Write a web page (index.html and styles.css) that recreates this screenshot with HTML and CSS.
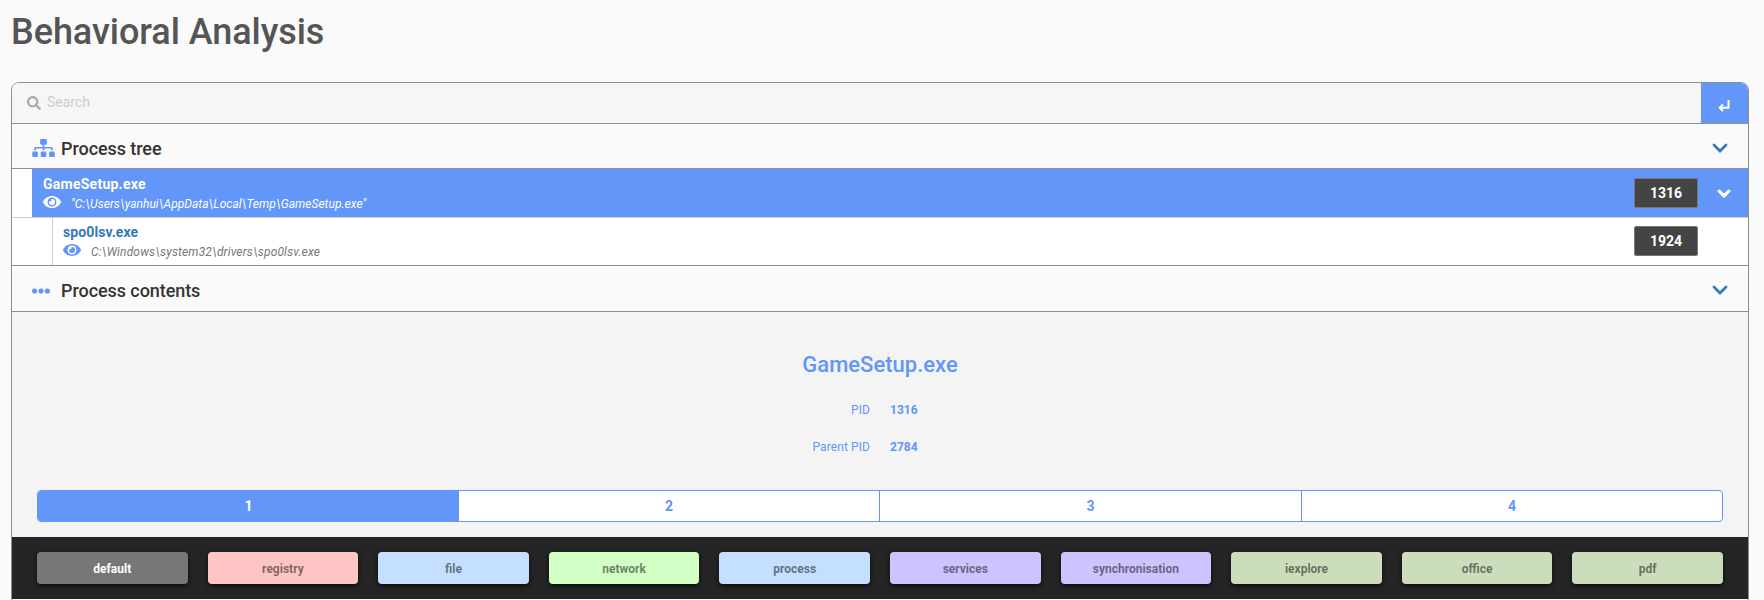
FILE: index.html
```html
<!DOCTYPE html>
<html lang="en">
<head>
<meta charset="utf-8">
<title>Behavioral Analysis</title>
<link rel="stylesheet" href="styles.css">
</head>
<body>
<h1 class="title">Behavioral Analysis</h1>
<main class="panel">
  <div class="search">
    <svg class="search-icon" viewBox="0 0 512 512"><path d="M505 442.700L405.300 343c-4.500-4.500-10.600-7-17-7H372c27.600-35.300 44-79.700 44-128C416 93.100 322.900 0 208 0S0 93.100 0 208s93.100 208 208 208c48.300 0 92.700-16.400 128-44v16.300c0 6.400 2.500 12.500 7 17l99.700 99.700c9.400 9.400 24.600 9.400 33.900 0l28.300-28.300c9.400-9.400 9.400-24.600.1-34zM208 336c-70.700 0-128-57.200-128-128 0-70.700 57.200-128 128-128 70.700 0 128 57.200 128 128 0 70.700-57.200 128-128 128z"/></svg>
    <input class="search-input" type="text" placeholder="Search">
    <button class="enter" aria-label="Submit"><svg viewBox="0 0 12 12"><path d="M10.500 0V7.800H2M5 4.500L1.700 7.800L5 11.100"/></svg></button>
  </div>
  <header class="section">
    <svg class="sitemap" viewBox="0 0 640 512"><path d="M128 352H32c-17.670 0-32 14.330-32 32v96c0 17.670 14.330 32 32 32h96c17.670 0 32-14.330 32-32v-96c0-17.670-14.330-32-32-32zm-24-80h192v48h48v-48h192v48h48v-57.590c0-21.170-17.230-38.410-38.410-38.410H344v-64h40c17.670 0 32-14.330 32-32V32c0-17.670-14.330-32-32-32H256c-17.670 0-32 14.330-32 32v96c0 17.670 14.330 32 32 32h40v64H94.410C73.230 224 56 241.230 56 262.410V320h48v-48zm264 80h-96c-17.670 0-32 14.330-32 32v96c0 17.670 14.330 32 32 32h96c17.670 0 32-14.330 32-32v-96c0-17.670-14.330-32-32-32zm240 0h-96c-17.670 0-32 14.330-32 32v96c0 17.670 14.330 32 32 32h96c17.670 0 32-14.330 32-32v-96c0-17.670-14.330-32-32-32z"/></svg>
    <h2>Process tree</h2>
    <svg class="chev" viewBox="0 0 16 10"><path d="M2 2L8 8L14 2"/></svg>
  </header>
  <div class="node active">
    <div class="node-text"><b>GameSetup.exe</b><div class="path"><svg class="eye" viewBox="0 64 576 384" preserveAspectRatio="none"><path d="M572.520 241.400C518.290 135.590 410.930 64 288 64S57.680 135.640 3.480 241.410a32.350 32.350 0 0 0 0 29.190C57.710 376.410 165.070 448 288 448s230.320-71.640 284.520-177.410a32.350 32.350 0 0 0 0-29.190zM288 400a144 144 0 1 1 144-144 143.930 143.930 0 0 1-144 144zm0-240a95.310 95.310 0 0 0-25.310 3.790 47.850 47.850 0 0 1-66.900 66.900A95.780 95.780 0 1 0 288 160z"/></svg><i>"C:\Users\yanhui\AppData\Local\Temp\GameSetup.exe"</i></div></div>
    <span class="pid">1316</span>
    <svg class="toggle" viewBox="0 0 14 10"><path d="M2.200 2.200L7 7L11.800 2.200"/></svg>
  </div>
  <div class="node child">
    <div class="node-text"><b>spo0lsv.exe</b><div class="path"><svg class="eye" viewBox="0 64 576 384" preserveAspectRatio="none"><path d="M572.520 241.400C518.290 135.590 410.930 64 288 64S57.680 135.640 3.480 241.410a32.350 32.350 0 0 0 0 29.190C57.710 376.410 165.070 448 288 448s230.320-71.640 284.520-177.410a32.350 32.350 0 0 0 0-29.190zM288 400a144 144 0 1 1 144-144 143.930 143.930 0 0 1-144 144zm0-240a95.310 95.310 0 0 0-25.310 3.790 47.850 47.850 0 0 1-66.900 66.900A95.780 95.780 0 1 0 288 160z"/></svg><i>C:\Windows\system32\drivers\spo0lsv.exe</i></div></div>
    <span class="pid">1924</span>
  </div>
  <header class="section contents-head">
    <svg class="dots" viewBox="0 0 18 6"><circle cx="2.600" cy="3" r="2.600"/><circle cx="9" cy="3" r="2.600"/><circle cx="15.400" cy="3" r="2.600"/></svg>
    <h2>Process contents</h2>
    <svg class="chev" viewBox="0 0 16 10"><path d="M2 2L8 8L14 2"/></svg>
  </header>
  <section class="contents">
    <h3>GameSetup.exe</h3>
    <dl><dt>PID</dt><dd>1316</dd><dt>Parent PID</dt><dd>2784</dd></dl>
    <nav class="pages"><a class="current">1</a><a>2</a><a>3</a><a>4</a></nav>
  </section>
  <div class="filters">
    <span class="default">default</span><span class="registry">registry</span><span class="file">file</span><span class="network">network</span><span class="file">process</span><span class="services">services</span><span class="services">synchronisation</span><span class="app">iexplore</span><span class="app">office</span><span class="app">pdf</span>
  </div>
</main>
</body>
</html>
```
FILE: styles.css
```css
* { box-sizing: border-box; }
body { margin: 0; height: 600px; overflow: hidden; background: #fafafa; color: #333; font: 14px/20px Roboto, sans-serif; }
.title { margin: 0; padding: 12px 11px 0; height: 82px; font-size: 36px; line-height: 40px; font-weight: 500; letter-spacing: -.05px; color: #555; }
.panel { margin: 0 15px 0 11px; height: 530px; border: 1px solid #8f8f8f; border-radius: 8px 8px 0 0; overflow: hidden; }
.search { display: flex; align-items: center; height: 41px; padding-left: 15px; background: #f6f6f6; border-bottom: 1px solid #8f8f8f; }
.search-icon { width: 14px; height: 14px; fill: #aaa; }
.search-input { flex: 1; margin: 0 0 2px 6px; padding: 0; border: 0; background: none; font: inherit; outline: 0; }
.search-input::placeholder { color: #ccc; opacity: 1; }
.enter { display: flex; width: 47px; height: 40px; padding: 5px 2px 0 0; align-items: center; justify-content: center; border: 0; background: #6296f8; }
.enter svg { width: 12px; height: 12px; fill: none; stroke: #fff; stroke-width: 2; }
.section { display: flex; align-items: center; height: 45px; padding: 5px 20px 0 20px; border-bottom: 1px solid #8f8f8f; }
.section h2 { flex: 1; margin: 0; padding-top: 1px; font-size: 18px; font-weight: 500; letter-spacing: -.07px; }
.sitemap { width: 23px; height: 18px; margin: 0 6px 1px 0; fill: #6296f8; }
.dots { width: 18px; height: 6px; margin: 0 11px 1px 0; fill: #6296f8; }
.chev { width: 16px; height: 10px; margin-bottom: 2px; fill: none; stroke: #337ab7; stroke-width: 2.700; stroke-linecap: round; }
.node { display: flex; position: relative; height: 48px; margin-left: 20px; background: #fff; }
.active { background: #6296f8; color: #fff; box-shadow: -20px 0 #fff; }
.child { margin-left: 0; padding-left: 40px; height: 49px; border-top: 1px solid #ccc; border-bottom: 1px solid #8f8f8f; }
.node-text { flex: 1; padding: 5px 0 0 11px; }
.child .node-text { border-left: 1px solid #ccc; padding: 4px 0 0 10px; }
.node b { display: block; line-height: 20px; letter-spacing: .25px; }
.child b { color: #337ab7; letter-spacing: .1px; }
.path { display: flex; align-items: center; height: 19px; font-size: 12px; }
.path i { padding-top: 1px; letter-spacing: .03px; }
.child i { color: #777; letter-spacing: .14px; }
.eye { width: 18px; height: 12px; margin: 0 10px 3px 0; fill: currentColor; }
.child .eye { fill: #6296f8; }
.pid { width: 64px; height: 30px; margin: 9px 50px 0 0; border: 1px solid #777; border-radius: 2px; background: #444; color: #fff; font-weight: 700; line-height: 28px; text-align: center; }
.child .pid { margin-top: 8px; }
.toggle { position: absolute; right: 17px; top: 20px; width: 14px; height: 10px; fill: none; stroke: #fff; stroke-width: 3.300; stroke-linecap: round; }
.contents-head { height: 46px; }
.contents-head h2 { padding: 0; }
.contents { height: 225px; padding: 38px 25px 0; background: #f4f4f4; color: #6296f8; }
.contents h3 { margin: 0; font-size: 22px; line-height: 30px; font-weight: 500; text-align: center; }
.contents dl { display: grid; grid-template-columns: 833px 1fr; column-gap: 20px; row-gap: 17px; margin: 20px 0 0; font-size: 12px; }
.contents dt { text-align: right; letter-spacing: .1px; }
.contents dd { margin: 0; font-weight: 700; }
.pages { display: grid; grid-template-columns: 421px 420px 422px 1fr; height: 32px; margin-top: 33px; border: 1px solid #6296f8; border-radius: 4px; background: #fff; overflow: hidden; font-weight: 700; line-height: 30px; text-align: center; }
.pages a + a { border-left: 1px solid #6296f8; }
.pages .current + a { border-left: 0; }
.pages .current { background: #6296f8; color: #fff; }
.filters { display: grid; grid-template-columns: repeat(10, 1fr); gap: 20px; height: 62px; padding: 15px 25px; background: #252525; }
.filters span { height: 32px; border-radius: 4px; box-shadow: 0 2px 5px rgba(0,0,0,.7); color: rgba(0,0,0,.5); font-size: 12px; font-weight: 700; line-height: 34px; text-align: center; }
.filters .default { background: #777; color: #fff; }
.registry { background: #ffc4c4; }
.file { background: #c4dfff; }
.network { background: #d2ffc4; }
.services { background: #cdc4ff; }
.app { background: #cbddbb; }
```
